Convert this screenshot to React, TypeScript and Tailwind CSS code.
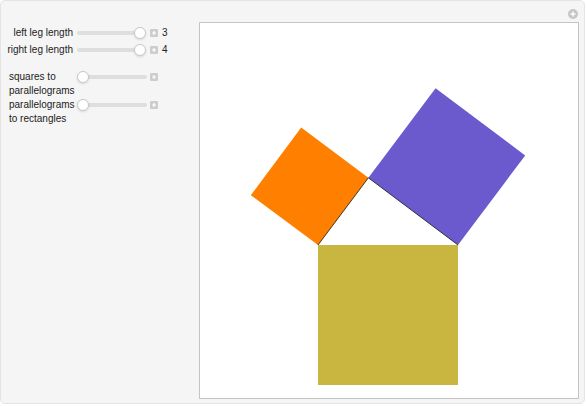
import React from 'react';

const font = { fontFamily: '"Liberation Sans", Arial, sans-serif' };

function PlusBox() {
  return (
    <div className="w-[8px] h-[8px] bg-[#cdcdcd] rounded-[1px] flex items-center justify-center">
      <svg width="6" height="6" viewBox="0 0 6 6">
        <path d="M3 1v4M1 3h4" stroke="#fff" strokeWidth="1.2" />
      </svg>
    </div>
  );
}

function Slider({ pos, w }: { pos: 'start' | 'end'; w: 'short' | 'long' }) {
  return (
    <div className={w === 'short' ? 'relative w-[68px] h-[12px] flex items-center' : 'relative w-[69px] h-[12px] flex items-center'}>
      <div className="w-full h-[4px] rounded-full bg-[#dedede]" />
      <div
        className={
          pos === 'end'
            ? 'absolute right-[-1px] top-0 w-[12px] h-[12px] rounded-full bg-white border border-[#c9c9c9] shadow-sm'
            : 'absolute left-[-1px] top-0 w-[12px] h-[12px] rounded-full bg-white border border-[#c9c9c9] shadow-sm'
        }
      />
    </div>
  );
}

export default function App() {
  const tri = { ax: 318, ay: 245, bx: 458, by: 245, cx: 368.4, cy: 177.8 };
  return (
    <div className="w-[586px] h-[406px] bg-white" style={font}>
      <div className="relative w-[585px] h-[404px] rounded-[5px] bg-[#f5f5f5] border border-[#e4e4e4] flex text-[10px] text-[#222]">
        {/* controls */}
        <div className="w-[198px] pt-[23px] flex flex-col">
          <div className="flex items-center h-[17px]">
            <div className="w-[73px] text-right pr-[1px]">left leg length</div>
            <div className="ml-[3px]"><Slider pos="end" w="short" /></div>
            <div className="ml-[5px]"><PlusBox /></div>
            <div className="ml-[4px]">3</div>
          </div>
          <div className="flex items-center h-[17px]">
            <div className="w-[73px] text-right pr-[1px]">right leg length</div>
            <div className="ml-[3px]"><Slider pos="end" w="short" /></div>
            <div className="ml-[5px]"><PlusBox /></div>
            <div className="ml-[4px]">4</div>
          </div>
          <div className="flex items-start h-[28px] mt-[12px]">
            <div className="w-[73px] pl-[8px] leading-[14px]">squares to parallelograms</div>
            <div className="ml-[4px] mt-[1px]"><Slider pos="start" w="long" /></div>
            <div className="ml-[3px] mt-[3px]"><PlusBox /></div>
          </div>
          <div className="flex items-start h-[28px]">
            <div className="w-[73px] pl-[8px] leading-[14px]">parallelograms to rectangles</div>
            <div className="ml-[4px] mt-[1px]"><Slider pos="start" w="long" /></div>
            <div className="ml-[3px] mt-[3px]"><PlusBox /></div>
          </div>
        </div>

        {/* canvas */}
        <div className="mt-[21px] w-[380px] h-[377px] border border-[#c4c4c4] bg-white">
          <svg width="378" height="375" viewBox="200 23 378 375">
            <polygon points="318,245 368.4,177.8 301.2,127.4 250.8,195.2" fill="#ff8000" />
            <polygon points="368.4,177.8 458,245 525.2,155.4 435.6,88.2" fill="#6a5acd" />
            <polygon points="318,245 458,245 458,385 318,385" fill="#c8b641" />
            <polyline
              points={`${tri.ax},${tri.ay} ${tri.cx},${tri.cy} ${tri.bx},${tri.by}`}
              fill="none"
              stroke="#111"
              strokeWidth="0.8"
            />
          </svg>
        </div>

        {/* top-right plus */}
        <div className="absolute right-[6px] top-[8px] w-[10px] h-[10px] rounded-full bg-[#c6c6c6] flex items-center justify-center">
          <svg width="6" height="6" viewBox="0 0 6 6">
            <path d="M3 0.5v5M0.5 3h5" stroke="#fff" strokeWidth="1.4" />
          </svg>
        </div>
      </div>
    </div>
  );
}
